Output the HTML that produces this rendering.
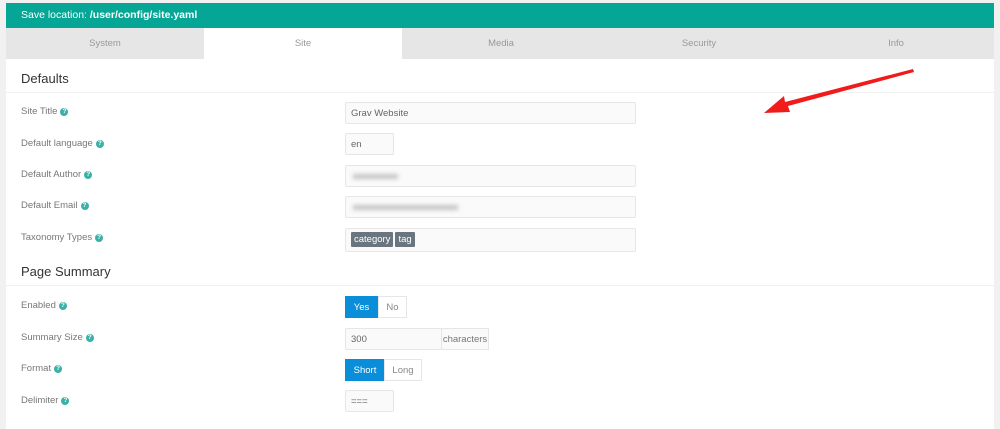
<!DOCTYPE html>
<html><head><style>
*{margin:0;padding:0;box-sizing:border-box}
body{width:1000px;height:425px;background:#f1f1f1;font-family:"Liberation Sans",sans-serif;position:relative;overflow:hidden}
.a{position:absolute}
.bar{left:6px;top:3px;width:988px;height:25px;background:#06a696;color:#fff;font-size:10.5px;line-height:25px;padding-left:15px}
.tabs{left:6px;top:28px;width:988px;height:31px;background:#e6e6e6}
.tab{position:absolute;top:0;height:31px;line-height:32px;text-align:center;font-size:9.5px;color:#999}
.content{left:6px;top:59px;width:988px;height:370px;background:#fff}
h2{position:absolute;font-weight:normal;font-size:13px;color:#333;left:21px}
.line{position:absolute;left:6px;width:988px;height:1px;background:#f0f0f0}
.lbl{position:absolute;left:21px;font-size:9.5px;color:#777;line-height:12px;display:flex;align-items:center}
.q{display:inline-block;width:8px;height:8px;border-radius:50%;background:#3bb0a8;color:#fff;font-size:6.5px;line-height:8px;text-align:center;font-weight:bold;margin-left:3px}
.in{position:absolute;left:345px;height:22px;border:1px solid #e6e6e6;border-radius:2px;background:#fafafa;font-size:9.5px;color:#666;line-height:21px;padding-left:5px}
.btn{position:absolute;height:22px;line-height:21px;font-size:9.5px;text-align:center;border:1px solid #e6e6e6;color:#888;background:#fff}
.on{background:#0a8ed9;color:#fff;border-color:#0a8ed9}
.tag{display:inline-block;background:#6b7580;color:#fff;font-size:9.5px;line-height:15px;padding:0 3px;margin-right:2px;border-radius:1px}
.blur{display:inline-block;height:5px;background:#c4c4c4;filter:blur(2px);vertical-align:middle;margin-left:2px}
</style></head><body>
<div class="a bar">Save location: <b>/user/config/site.yaml</b></div>
<div class="a tabs">
<div class="tab" style="left:0;width:198px">System</div>
<div class="tab" style="left:198px;width:198px;background:#fff">Site</div>
<div class="tab" style="left:396px;width:198px">Media</div>
<div class="tab" style="left:594px;width:198px">Security</div>
<div class="tab" style="left:792px;width:196px">Info</div>
</div>
<div class="a content"></div>
<h2 style="top:71px">Defaults</h2>
<div class="line" style="top:92px"></div>
<div class="lbl" style="top:106px">Site Title<span class="q">?</span></div>
<div class="in" style="top:102px;width:291px">Grav Website</div>
<div class="lbl" style="top:138px">Default language<span class="q">?</span></div>
<div class="in" style="top:133px;width:49px">en</div>
<div class="lbl" style="top:169px">Default Author<span class="q">?</span></div>
<div class="in" style="top:165px;width:291px"><span class="blur" style="width:45px"></span></div>
<div class="lbl" style="top:200px">Default Email<span class="q">?</span></div>
<div class="in" style="top:196px;width:291px"><span class="blur" style="width:105px"></span></div>
<div class="lbl" style="top:232px">Taxonomy Types<span class="q">?</span></div>
<div class="in" style="top:228px;width:291px;height:24px;padding:3px 0 0 5px;line-height:15px"><span class="tag">category</span><span class="tag">tag</span></div>
<h2 style="top:264px">Page Summary</h2>
<div class="line" style="top:285px"></div>
<div class="lbl" style="top:300px">Enabled<span class="q">?</span></div>
<div class="btn on" style="left:345px;top:296px;width:33px">Yes</div>
<div class="btn" style="left:378px;top:296px;width:29px">No</div>
<div class="lbl" style="top:332px">Summary Size<span class="q">?</span></div>
<div class="in" style="top:328px;width:97px">300</div>
<div class="btn" style="left:441px;top:328px;width:48px;background:#fafafa;color:#777">characters</div>
<div class="lbl" style="top:363px">Format<span class="q">?</span></div>
<div class="btn on" style="left:345px;top:359px;width:40px">Short</div>
<div class="btn" style="left:384px;top:359px;width:38px">Long</div>
<div class="lbl" style="top:395px">Delimiter<span class="q">?</span></div>
<div class="in" style="top:390px;width:49px">===</div>
<svg class="a" style="left:0;top:0" width="1000" height="425"><path d="M913 69 L914 72 L788 106 L790 112 L764 113 L784 96 L785 102 Z" fill="#f01b1b"/></svg>
</body></html>
